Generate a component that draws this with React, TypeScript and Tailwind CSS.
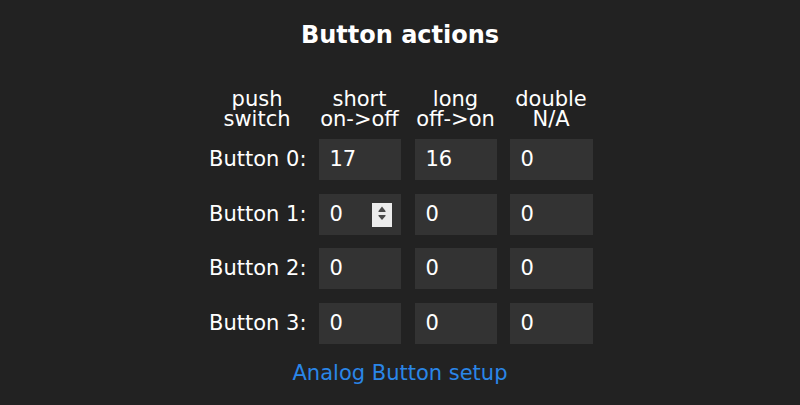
import React from "react";

const rows = [
  { label: "Button 0:", values: ["17", "16", "0"] },
  { label: "Button 1:", values: ["0", "0", "0"], spin: true },
  { label: "Button 2:", values: ["0", "0", "0"] },
  { label: "Button 3:", values: ["0", "0", "0"] },
];

const rowGap = ["mt-0", "mt-[14px]", "mt-[13px]", "mt-[14px]"];

const Spinner = () => (
  <svg width="20" height="24" viewBox="0 0 20 24" className="shrink-0">
    <rect width="20" height="24" fill="#ececec" />
    <path d="M10 3.5 L13.5 8 L6.5 8 Z" fill="#4a4a4a" />
    <rect x="6.5" y="8" width="7" height="1" fill="#4a4a4a" />
    <rect x="6.5" y="12" width="7" height="1" fill="#4a4a4a" />
    <path d="M6.5 13 L13.5 13 L10 17 Z" fill="#4a4a4a" />
  </svg>
);

const Cell = ({
  value,
  width,
  spin,
}: {
  value: string;
  width: string;
  spin?: boolean;
}) => (
  <div
    className={`${width} h-[41px] bg-[#333333] flex items-center justify-between pl-[11px] pr-[9px] text-white`}
  >
    <span>{value}</span>
    {spin && <Spinner />}
  </div>
);

export default function App() {
  return (
    <div
      className="w-[800px] h-[405px] bg-[#222222] flex flex-col items-center text-white"
      style={{ fontFamily: '"DejaVu Sans", Verdana, sans-serif' }}
    >
      <h1 className="pt-[21px] text-[24px] leading-[28px] font-bold">
        Button actions
      </h1>

      <div className="mt-[40px] flex text-[21px] leading-[20px] text-center">
        <div className="w-[99px]">
          push
          <br />
          switch
        </div>
        <div className="w-[82px] ml-[12px]">
          short
          <br />
          on-&gt;off
        </div>
        <div className="w-[82px] ml-[14px]">
          long
          <br />
          off-&gt;on
        </div>
        <div className="w-[83px] ml-[13px]">
          double
          <br />
          N/A
        </div>
      </div>

      <div className="mt-[10px] flex flex-col text-[21px]">
        {rows.map((row, i) => (
          <div key={row.label} className={`flex items-center ${rowGap[i]}`}>
            <div className="w-[99px] text-right whitespace-nowrap">
              {row.label}
            </div>
            <div className="ml-[12px]">
              <Cell value={row.values[0]} width="w-[82px]" spin={row.spin} />
            </div>
            <div className="ml-[14px]">
              <Cell value={row.values[1]} width="w-[82px]" />
            </div>
            <div className="ml-[13px]">
              <Cell value={row.values[2]} width="w-[83px]" />
            </div>
          </div>
        ))}
      </div>

      <a
        href="#"
        className="mt-[17px] text-[21px] leading-[24px] text-[#2a86e8]"
      >
        Analog Button setup
      </a>
    </div>
  );
}
